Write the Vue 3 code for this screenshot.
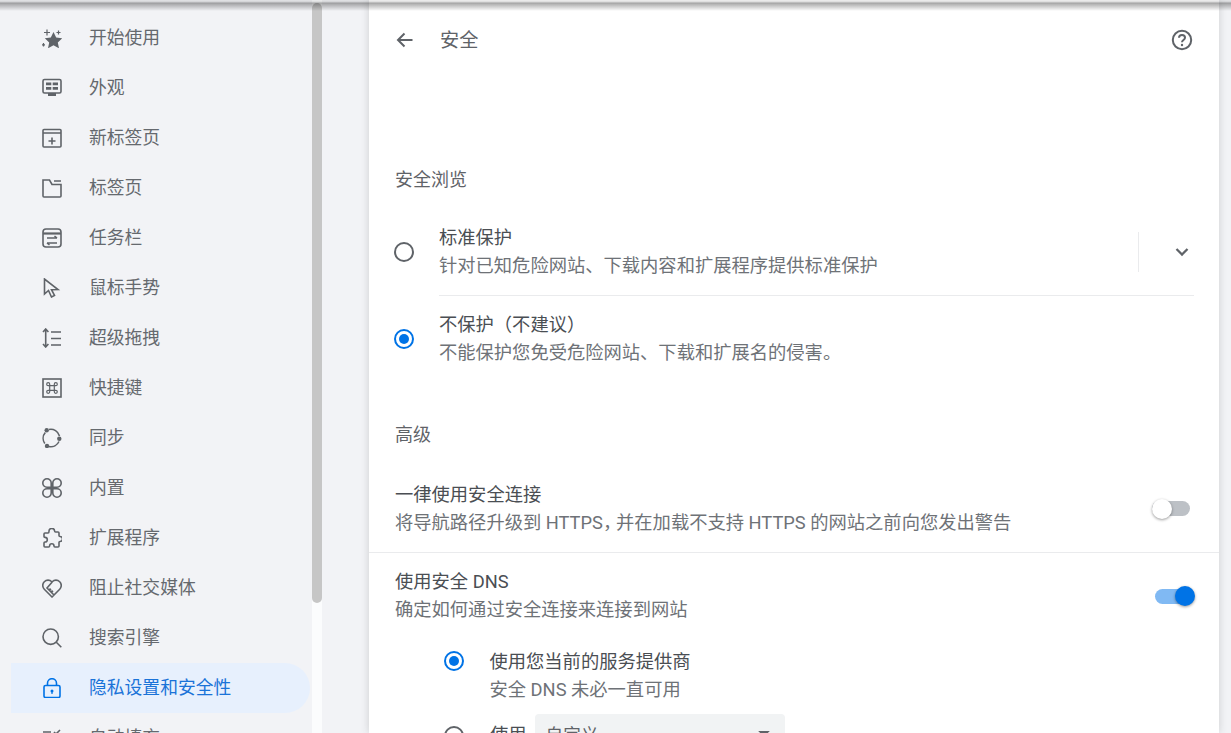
<template>
  <div class="page">
    <div class="top-shadow"></div>
    <aside class="side">
      <nav class="nav">
        <a v-for="item in navItems" :key="item.label" class="nav-item" :class="{ active: item.active }">
          <svg class="nav-icon" viewBox="0 0 20 20" v-html="item.icon"></svg>
          <span>{{ item.label }}</span>
        </a>
      </nav>
      <div class="scroll"><div class="thumb"></div></div>
    </aside>
    <main class="main">
      <section class="card">
        <header class="head">
          <svg class="back" viewBox="0 0 20 20"><path d="M17.5 10H3.5M9.5 3.5L3 10l6.5 6.5" /></svg>
          <h1>安全</h1>
          <svg class="help" viewBox="0 0 22 22">
            <circle cx="11" cy="11" r="9.2" />
            <path d="M8 8.800C8 7 9.400 6 11 6s3 1 3 2.700c0 2.300-3 2.400-3 4.600" />
            <circle class="dot" cx="11" cy="16" r="1.200" />
          </svg>
        </header>

        <h2 class="heading first">安全浏览</h2>
        <div class="choice">
          <span class="radio up"></span>
          <div class="choice-body line">
            <div class="text">
              <div class="primary">标准保护</div>
              <div class="secondary">针对已知危险网站、下载内容和扩展程序提供标准保护</div>
            </div>
            <div class="expand">
              <svg viewBox="0 0 14 14"><path d="M1.500 4L7 9.500 12.500 4" /></svg>
            </div>
          </div>
        </div>
        <div class="choice">
          <span class="radio on"></span>
          <div class="choice-body">
            <div class="text">
              <div class="primary">不保护（不建议）</div>
              <div class="secondary">不能保护您免受危险网站、下载和扩展名的侵害。</div>
            </div>
          </div>
        </div>

        <h2 class="heading second">高级</h2>
        <div class="setting upper">
          <div class="text">
            <div class="primary">一律使用安全连接</div>
            <div class="secondary">将导航路径升级到 HTTPS<span class="comma">，</span>并在加载不支持 HTTPS 的网站之前向您发出警告</div>
          </div>
          <span class="toggle"></span>
        </div>
        <div class="setting lower">
          <div class="text">
            <div class="primary">使用安全 DNS</div>
            <div class="secondary">确定如何通过安全连接来连接到网站</div>
          </div>
          <span class="toggle on"></span>
        </div>

        <div class="sub">
          <span class="radio on"></span>
          <div class="text">
            <div class="primary">使用您当前的服务提供商</div>
            <div class="secondary">安全 DNS 未必一直可用</div>
          </div>
        </div>
        <div class="sub custom">
          <span class="radio"></span>
          <span class="primary">使用</span>
          <div class="select">
            <span>自定义</span>
            <svg viewBox="0 0 10 6"><path d="M0 0h10L5 5z" /></svg>
          </div>
        </div>
      </section>
    </main>
  </div>
</template>

<script setup>
const navItems = [
  {
    label: "开始使用",
    icon: '<path class="fill" d="M11.500 4l2.700 5.600 6 .7-4.400 4.100 1.200 5.900-5.500-3-5.500 3 1.200-5.900-4.400-4.100 6-.7z"/><path class="thin" d="M5 1.500v6M2 4.500h6M16.500 2.500v4M14.500 4.500h4M1.500 15v3.500M0 16.800h3"/>',
  },
  {
    label: "外观",
    icon: '<rect x="1" y="1.500" width="18" height="13.500" rx="1.500"/><path class="fill" d="M4 4.500h5.300v2.800H4zM10.700 4.500H16v2.800h-5.300zM4 9h5.300v2.800H4zM10.700 9H16v2.800h-5.300zM6 15h8v3H6z"/>',
  },
  {
    label: "新标签页",
    icon: '<rect x="1" y="1.500" width="18" height="17.500" rx="1"/><path d="M1 5h18M10 9.500v7M6.500 13h7"/>',
  },
  {
    label: "标签页",
    icon: '<path d="M1 2v16a1 1 0 0 0 1 1h16a1 1 0 0 0 1-1V6.500h-9L7.500 2zM12 3h7"/>',
  },
  {
    label: "任务栏",
    icon: '<rect x="1" y="1" width="18" height="18" rx="3"/><path d="M1 5.500h18" stroke-width="2.200"/><path d="M5 10h10M12.500 8l2.500 2M15 15H5M7.500 17L5 15"/>',
  },
  {
    label: "鼠标手势",
    icon: '<path d="M2.500 1v15l4-3.500 3 6.500 3-1.500-3-5.800 6.500-.2z"/>',
  },
  {
    label: "超级拖拽",
    icon: '<path d="M3.700 1v18M1 4L3.700 1l2.700 3M1 16l2.700 3 2.700-3M9 4h10M9 10.500h10M9 17h10"/>',
  },
  {
    label: "快捷键",
    icon: '<rect x="1" y="1" width="18" height="18"/><path class="thin" d="M7.700 7.700h4.600v4.600H7.700zM7.700 7.700H6.200A1.500 1.500 0 1 1 7.700 6.200zM12.300 7.700V6.200A1.500 1.500 0 1 1 13.800 7.700zM7.700 12.300v1.500A1.500 1.500 0 1 1 6.200 12.300zM12.300 12.300h1.500a1.500 1.500 0 1 1-1.500 1.500z"/>',
  },
  {
    label: "同步",
    icon: '<path d="M7 1.500A9 9 0 0 1 17.500 8M17 13.500a9 9 0 0 1-10 5M2.800 15.500a9 9 0 0 1 .5-11"/><circle class="fill" cx="4.700" cy="2.200" r="2.200"/><circle class="fill" cx="17.300" cy="10.800" r="2.200"/><circle class="fill" cx="5" cy="18" r="2.200"/>',
  },
  {
    label: "内置",
    icon: '<path d="M5 .8a4.200 4.200 0 0 1 4.200 4.200v4.200H5A4.200 4.200 0 0 1 5 .8zM15 .8a4.200 4.200 0 0 1 0 8.400h-4.200V5A4.200 4.200 0 0 1 15 .8zM5 19.200a4.200 4.200 0 0 1 0-8.400h4.200V15A4.200 4.200 0 0 1 5 19.200zM15 19.200a4.200 4.200 0 0 1-4.200-4.200v-4.200H15a4.200 4.200 0 0 1 0 8.400z"/>',
  },
  {
    label: "扩展程序",
    icon: '<path d="M7 3.500a2.800 2.800 0 0 1 5.600-.5c0 .5.400 1 1 1h2.400a1 1 0 0 1 1 1v2.500c0 .6.500 1 1 1a2.500 2.500 0 0 1 0 5c-.5 0-1 .4-1 1V18a1 1 0 0 1-1 1h-3c-.6 0-1-.5-1-1a2.200 2.200 0 0 0-4.400 0c0 .5-.4 1-1 1H3a1 1 0 0 1-1-1v-3c0-.6.500-1 1-1a2.300 2.300 0 0 0 0-4.600c-.5 0-1-.4-1-1V6a1 1 0 0 1 1-1h3c.5 0 1-.5 1-1.500z"/>',
  },
  {
    label: "阻止社交媒体",
    icon: '<path d="M10 19L2.300 11.200A5.300 5.300 0 0 1 9.800 3.700l.2.300.2-.3a5.300 5.300 0 0 1 7.500 7.500zM10 4.200L5 10l7 7M7.500 10.500l1.500 1.500M9.500 12.500l1.500 1.500"/>',
  },
  {
    label: "搜索引擎",
    icon: '<circle cx="8.700" cy="8.700" r="7.700"/><path d="M14.300 14.300l5 5"/>',
  },
  {
    label: "隐私设置和安全性",
    active: true,
    icon: '<rect x="2" y="7.500" width="16" height="12" rx="1.500"/><path d="M5.500 7.500V5.200a4.500 4.500 0 0 1 9 0v2.300"/><circle class="fill" cx="10" cy="13" r="1.500"/><path class="thin" d="M10 13v3"/>',
  },
  {
    label: "自动填充",
    icon: '<path d="M1 4h8M1 10h13M1 16h8M12 4l2 2 4-4"/>',
  },
]
</script>

<style>
html,
body {
  margin: 0;
  overflow: hidden;
}
</style>

<style scoped>
.page {
  position: relative;
  display: flex;
  height: 733px;
  overflow: hidden;
  background: #f2f3f6;
  color: #5f6368;
  font-family: Roboto, "Noto Sans CJK SC", sans-serif;
}

.top-shadow {
  position: absolute;
  top: 0;
  left: 0;
  right: 0;
  height: 11px;
  z-index: 5;
  background: linear-gradient(rgba(0, 0, 0, 0.06) 0, rgba(0, 0, 0, 0.14) 2px, rgba(0, 0, 0, 0.36) 3px, rgba(0, 0, 0, 0.3) 4px, rgba(0, 0, 0, 0) 11px);
}

.side {
  display: flex;
  flex: none;
  width: 322px;
}

.nav {
  flex: 1;
  padding: 13px 2px 0 11px;
}

.nav-item {
  display: flex;
  align-items: center;
  height: 50px;
  font-size: 17.8px;
  border-radius: 0 25px 25px 0;
  color: #65696e;
}

.nav-item span {
  line-height: 28px;
  margin-bottom: 1px;
}

.nav-item.active {
  color: #1a73d8;
  background: #e7f0fd;
}

.nav-icon {
  flex: none;
  width: 20px;
  height: 20px;
  margin: 0 27px 0 31px;
  fill: none;
  stroke: #5f6368;
  stroke-width: 1.600;
}

.nav-icon :deep(.fill) {
  fill: #5f6368;
  stroke: none;
}

.nav-icon :deep(.thin) {
  stroke-width: 1.200;
}

.active .nav-icon {
  stroke: #0073e6;
}

.active .nav-icon :deep(.fill) {
  fill: #0073e6;
}

.scroll {
  flex: none;
  width: 10px;
  background: #fbfcfd;
}

.thumb {
  height: 600px;
  margin-top: 3px;
  background: #c6c6c6;
  border-radius: 5px;
}

.main {
  flex: 1;
  padding-left: 47px;
}

.card {
  width: 850px;
  height: 733px;
  background: #fff;
  box-shadow: 0 0 8px rgba(60, 64, 67, 0.2);
}

.head {
  display: flex;
  align-items: center;
  height: 80px;
  padding: 0 26px;
}

.head h1 {
  flex: 1;
  margin: 1px 0 0;
  font-size: 19.200px;
  font-weight: 400;
  line-height: 28px;
}

.back {
  width: 20px;
  height: 20px;
  margin-right: 25px;
  fill: none;
  stroke: #5f6368;
  stroke-width: 2;
}

.help {
  width: 22px;
  height: 22px;
  fill: none;
  stroke: #5f6368;
  stroke-width: 2;
}

.help .dot {
  fill: #5f6368;
  stroke: none;
}

.heading {
  margin: 0;
  padding-left: 26px;
  font-size: 18px;
  font-weight: 400;
  line-height: 28px;
}

.heading.first {
  margin-top: 86px;
  margin-bottom: 15px;
}

.heading.second {
  margin-top: 39px;
  margin-bottom: 15px;
}

.text {
  flex: 1;
  min-width: 0;
}

.primary {
  font-size: 18.300px;
  line-height: 28px;
  color: #4a4e53;
}

.secondary {
  font-size: 18.300px;
  line-height: 28px;
  color: #6e7277;
}

.comma {
  font-feature-settings: "halt";
  margin-right: 4px;
}

.choice {
  display: flex;
  align-items: center;
  padding: 0 25px;
}

.choice-body {
  display: flex;
  flex: 1;
  align-items: center;
  height: 86px;
  margin-left: 25px;
}

.choice-body.line {
  border-bottom: 1px solid #eaebed;
}

.expand {
  display: flex;
  align-items: center;
  justify-content: flex-end;
  height: 40px;
  width: 56px;
  padding-right: 5px;
  box-sizing: border-box;
  border-left: 1px solid #eaebed;
}

.expand svg {
  width: 14px;
  height: 14px;
  margin-bottom: 1px;
  fill: none;
  stroke: #5f6368;
  stroke-width: 2.300;
}

.radio {
  position: relative;
  flex: none;
  box-sizing: border-box;
  width: 20px;
  height: 20px;
  border: 2px solid #5f6368;
  border-radius: 50%;
}

.radio.up {
  margin-bottom: 1px;
}

.radio.on {
  border-color: #0073e6;
}

.radio.on::after {
  content: "";
  position: absolute;
  inset: 3px;
  background: #0073e6;
  border-radius: 50%;
}

.setting {
  display: flex;
  align-items: center;
  padding: 0 24px 0 26px;
}

.setting.upper {
  height: 87px;
  padding-top: 1px;
  border-bottom: 1px solid #eaebed;
}

.setting.lower {
  height: 86px;
  padding-bottom: 2px;
}

.toggle {
  position: relative;
  flex: none;
  width: 38px;
  height: 15px;
  border-radius: 8px;
  background: #bdc1c6;
  margin-right: 5px;
}

.toggle::after {
  content: "";
  position: absolute;
  top: -2.500px;
  left: 0;
  width: 20px;
  height: 20px;
  background: #fff;
  border-radius: 50%;
  box-shadow: 0 1px 3px rgba(0, 0, 0, 0.4);
}

.toggle.on {
  width: 36px;
  margin-right: 4px;
  margin-left: 3px;
  background: #80b9f3;
}

.toggle.on::after {
  left: 20px;
  background: #0073e6;
}

.sub {
  display: flex;
  align-items: flex-start;
  height: 64px;
  margin-top: -1px;
  padding: 8px 26px 0 75px;
}

.sub > .radio {
  margin-top: 3px;
  margin-right: 25.500px;
}

.sub.custom {
  height: auto;
  padding-top: 3px;
}

.sub.custom > .radio {
  margin-top: 12px;
  margin-right: 26px;
}

.sub.custom > .primary {
  line-height: 42px;
}

.select {
  display: flex;
  align-items: center;
  justify-content: space-between;
  box-sizing: border-box;
  width: 250px;
  height: 38px;
  margin-left: 8px;
  padding: 0 15px 0 11px;
  background: #f1f3f4;
  border-radius: 4px;
  font-size: 17.600px;
}

.select svg {
  width: 12px;
  height: 7px;
  margin-top: 2px;
  fill: #5f6368;
}
</style>
